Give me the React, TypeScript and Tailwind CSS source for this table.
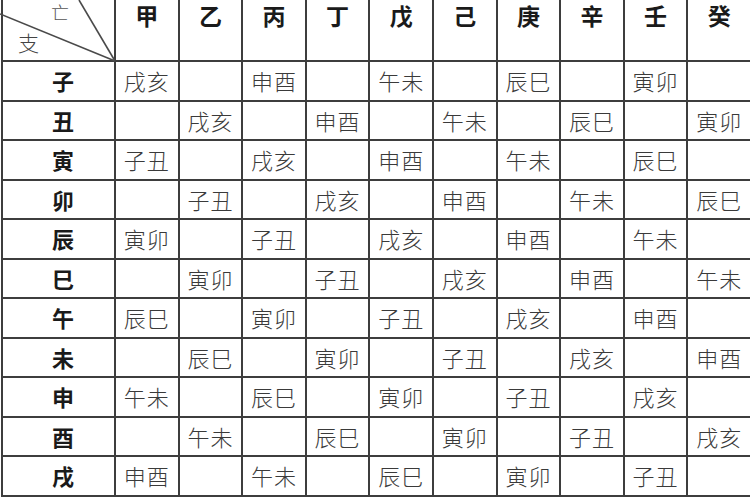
const stems = ["甲", "乙", "丙", "丁", "戊", "己", "庚", "辛", "壬", "癸"]
const branches = ["子", "丑", "寅", "卯", "辰", "巳", "午", "未", "申", "酉", "戌"]
const voids = ["戌亥", "申酉", "午未", "辰巳", "寅卯", "子丑"]

// 旬空 lookup: the decade starts at branch (row - col) mod 12
function lookup(row: number, col: number) {
  if ((row - col) % 2 !== 0) return ""
  const start = ((row - col) % 12 + 12) % 12
  const order = [0, 10, 8, 6, 4, 2]
  const k = order.indexOf(start)
  return k >= 0 ? voids[k] : ""
}

export default function App() {
  return (
    <div className="w-[750px] h-[500px] overflow-hidden bg-white" style={{ fontFamily: '"Noto Sans CJK SC", "Noto Sans", sans-serif' }}>
      <div className="ml-[1px] w-[749px] border-l-2 border-b-2 border-[#3d3d3d] bg-[#3d3d3d] grid grid-cols-[111px_repeat(10,1fr)] grid-rows-[60px_repeat(11,37.5px)] gap-[2px]">
        <div className="relative bg-white">
          <svg className="absolute left-[-3px] top-0 overflow-visible" width="118" height="62">
            <line x1="0" y1="14" x2="115" y2="61" stroke="#4a4a4a" strokeWidth="1.6" />
            <line x1="79" y1="0" x2="115" y2="61" stroke="#4a4a4a" strokeWidth="1.6" />
          </svg>
          <span className="absolute left-[48px] top-[3px] text-[18px] leading-none text-[#555] font-light">亡</span>
          <span className="absolute left-[15px] top-[32px] text-[21px] leading-none text-[#444] font-light">支</span>
        </div>
        {stems.map((s) => (
          <div key={s} className="bg-white flex justify-center pt-[4px] text-[23px] font-bold leading-none text-[#1a1a1a]">
            {s}
          </div>
        ))}
        {branches.map((b, r) => (
          <>
            <div key={b} className="bg-white flex items-center justify-center pl-[9px] text-[22px] font-bold text-[#1a1a1a]">
              {b}
            </div>
            {stems.map((s, c) => (
              <div key={b + s} className="bg-white flex items-center justify-center text-[22px] tracking-[1px] text-[#3a3a3a] font-light">
                {lookup(r, c)}
              </div>
            ))}
          </>
        ))}
      </div>
    </div>
  )
}
